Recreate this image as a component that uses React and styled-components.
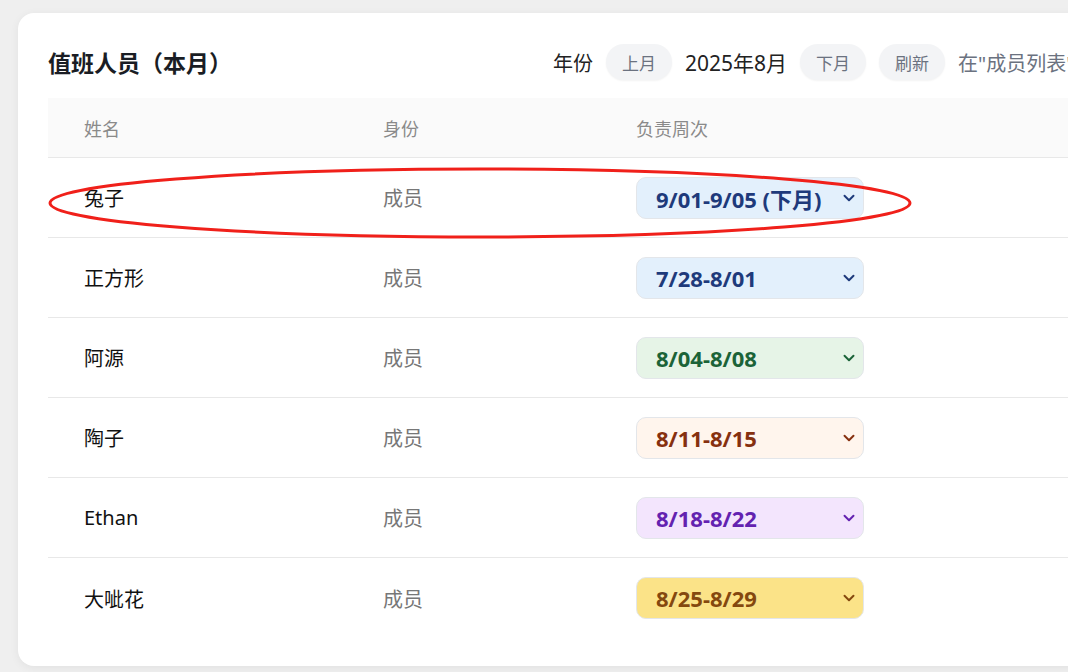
import React from 'react';
import styled, { createGlobalStyle } from 'styled-components';

const Global = createGlobalStyle`
  html, body { margin: 0; padding: 0; }
  body {
    background: #efefef;
    font-family: "Noto Sans", "Noto Sans CJK SC", sans-serif;
    overflow: hidden;
  }
`;

const Page = styled.div`
  width: 1068px;
  height: 672px;
  padding: 13px 0 0 18px;
  box-sizing: border-box;
  overflow: hidden;
  position: relative;
`;

const Card = styled.div`
  width: 1100px;
  height: 653px;
  background: #fff;
  border-radius: 16px;
  box-shadow: 0 2px 10px rgba(0, 0, 0, 0.06);
  padding: 26px 0 0 30px;
  box-sizing: border-box;
`;

const TopBar = styled.div`
  display: flex;
  align-items: center;
  height: 46px;
  margin-bottom: 13px;
  white-space: nowrap;
`;

const Title = styled.h1`
  margin: 0;
  width: 505px;
  flex-shrink: 0;
  font-size: 23px;
  font-weight: 700;
  color: #1a1d24;
  font-family: "Noto Sans CJK SC", sans-serif;
`;

const Tools = styled.div`
  display: flex;
  align-items: center;
  gap: 13px;
  font-family: "Noto Sans", "Noto Sans CJK SC", sans-serif;
`;

const Label = styled.span`
  font-size: ${p => p.wide ? '21px' : '20px'};
  color: ${p => p.muted ? '#6b7280' : '#222'};
`;

const Pill = styled.button`
  height: 36px;
  width: 66px;
  flex-shrink: 0;
  border: none;
  border-radius: 18px;
  background: #f3f4f6;
  color: #6b7280;
  font-size: 17px;
  font-family: "Noto Sans CJK SC", sans-serif;
  box-shadow: 0 1px 2px rgba(0, 0, 0, 0.05);
  padding: 0;
`;

const Table = styled.div`
  width: 1100px;
`;

const Row = styled.div`
  display: grid;
  grid-template-columns: 299px 253px 1fr;
  align-items: center;
  height: ${p => p.head ? '60px' : '80px'};
  background: ${p => p.head ? '#fafafa' : '#fff'};
  border-bottom: ${p => p.last ? 'none' : '1px solid #e8e8e8'};
  box-sizing: border-box;
`;

const Cell = styled.div`
  padding-left: 36px;
  font-family: "Noto Sans", "Noto Sans CJK SC", sans-serif;
  font-size: ${p => p.head ? '18px' : '20px'};
  color: ${p => p.head ? '#8a8a8a' : p.muted ? '#777' : '#111'};
`;

const Select = styled.div`
  display: flex;
  align-items: center;
  justify-content: space-between;
  width: 228px;
  height: 42px;
  box-sizing: border-box;
  padding: 0 5px 0 19px;
  border: 1px solid #e3e6ea;
  border-radius: 10px;
  background: ${p => p.bg};
  color: ${p => p.fg};
  font-family: "Noto Sans", "Noto Sans CJK SC", sans-serif;
  font-size: 22px;
  font-weight: 700;
  white-space: nowrap;
`;

const Chevron = ({ color }) => (
  <svg width="18" height="18" viewBox="0 0 24 24" fill="none" stroke={color} strokeWidth="2.6" strokeLinecap="round" strokeLinejoin="round">
    <path d="M6 9l6 6 6-6" />
  </svg>
);

const Annotation = styled.svg`
  position: absolute;
  left: 0;
  top: 0;
  pointer-events: none;
`;

const rows = [
  { name: '兔子', week: '9/01-9/05 (下月)', bg: '#e3f0fc', fg: '#1e3a7b' },
  { name: '正方形', week: '7/28-8/01', bg: '#e3f0fc', fg: '#1e3a7b' },
  { name: '阿源', week: '8/04-8/08', bg: '#e6f4e7', fg: '#1b6338' },
  { name: '陶子', week: '8/11-8/15', bg: '#fff5ed', fg: '#86300f' },
  { name: 'Ethan', week: '8/18-8/22', bg: '#f3e5fd', fg: '#6322b0' },
  { name: '大呲花', week: '8/25-8/29', bg: '#fbe388', fg: '#84480f' },
];

export default function App() {
  return (
    <Page>
      <Global />
      <Card>
        <TopBar>
          <Title>值班人员（本月）</Title>
          <Tools>
            <Label>年份</Label>
            <Pill>上月</Pill>
            <Label wide>2025年8月</Label>
            <Pill>下月</Pill>
            <Pill>刷新</Pill>
            <Label muted>在"成员列表"中维护成员</Label>
          </Tools>
        </TopBar>
        <Table>
          <Row head>
            <Cell head>姓名</Cell>
            <Cell head>身份</Cell>
            <Cell head>负责周次</Cell>
          </Row>
          {rows.map((r, i) => (
            <Row key={r.name} last={i === rows.length - 1}>
              <Cell>{r.name}</Cell>
              <Cell muted>成员</Cell>
              <Cell>
                <Select bg={r.bg} fg={r.fg}>
                  <span>{r.week}</span>
                  <Chevron color={r.fg} />
                </Select>
              </Cell>
            </Row>
          ))}
        </Table>
      </Card>
      <Annotation width="1068" height="672">
        <ellipse cx="480" cy="203" rx="430" ry="34" fill="none" stroke="#f0201a" strokeWidth="3" />
      </Annotation>
    </Page>
  );
}
